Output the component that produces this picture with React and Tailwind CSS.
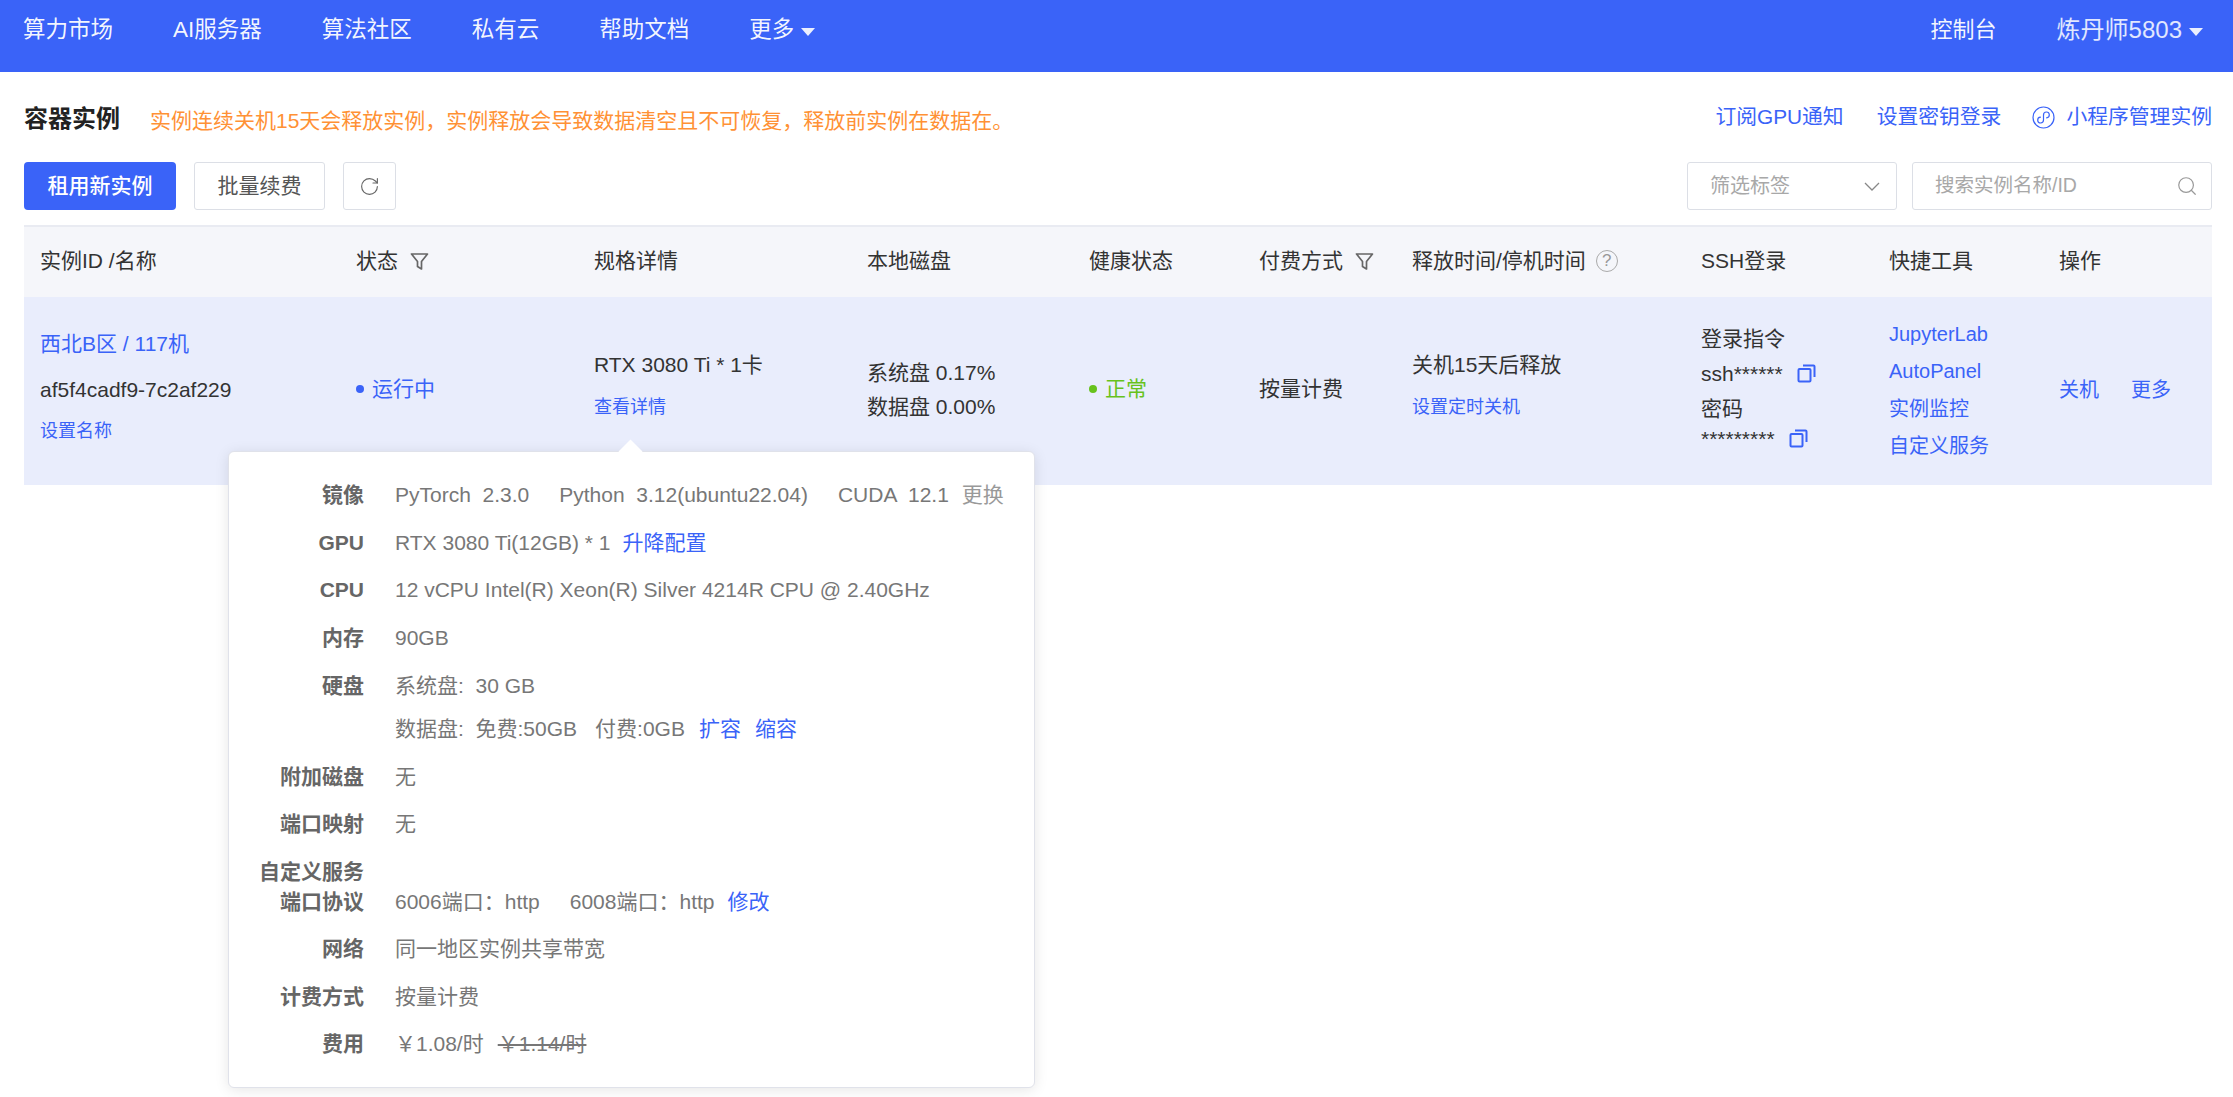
import React from 'react';
import { RotateCw, Search } from 'lucide-react';

const navItems = ['算力市场', 'AI服务器', '算法社区', '私有云', '帮助文档'];

function Caret() {
  return <span className="ml-[7px] mt-1 inline-block h-0 w-0 border-x-[7px] border-t-[8px] border-x-transparent border-t-white/90" />;
}

function Funnel({ className }) {
  return (
    <svg className={className} width="19" height="19" viewBox="0 0 19 19" fill="none" stroke="#666" strokeWidth="1.7" strokeLinejoin="round">
      <path d="M1.5 2h16l-6 7.5v7.5l-4-2.5v-5z" />
    </svg>
  );
}

function CopyIcon({ className }) {
  return (
    <svg className={className} width="19" height="19" viewBox="0 0 19 19" fill="none" stroke="#3a63f8" strokeWidth="2">
      <rect x="1.5" y="5" width="12" height="12.5" rx="1" />
      <path d="M6 1.5h10.5a1 1 0 0 1 1 1V13" />
    </svg>
  );
}

function MiniAppIcon() {
  return (
    <svg width="23" height="23" viewBox="0 0 23 23" fill="none" stroke="#3a63f8" strokeWidth="1.2" strokeLinecap="round">
      <circle cx="11.5" cy="11.5" r="10.5" />
      <path d="M8.4 11.2a2.9 2.9 0 1 0 3.1 2.9V8.9a2.9 2.9 0 1 1 3.1 2.9" />
    </svg>
  );
}

function Row({ label, className = 'mt-[17.5px]', children }) {
  return (
    <div className={`flex h-[30px] items-center leading-[30px] ${className}`}>
      <div className="w-[135px] shrink-0 text-right font-bold text-[#666]">{label}</div>
      <div className="ml-[31px] flex items-center whitespace-pre text-[#777]">{children}</div>
    </div>
  );
}

function PopLink({ children, className = '' }) {
  return <span className={`text-[#3a63f8] ${className}`}>{children}</span>;
}

export default function App() {
  return (
    <div className="min-h-[1097px] bg-white text-[21px] text-[#333] [font-family:'Liberation_Sans','Noto_Sans_CJK_SC',sans-serif]">
      <div className="flex h-[72px] justify-between bg-[#3a63f8] pl-[23px] pr-[30px] pt-[14px] text-[22.5px] leading-[32px] text-white/95">
        <div className="flex gap-[60px]">
          {navItems.map(n => <span key={n}>{n}</span>)}
          <span className="flex items-center self-start">更多<Caret /></span>
        </div>
        <div className="flex gap-[60px] text-[22px]">
          <span>控制台</span>
          <span className="flex items-center self-start text-[24px] text-white/85">炼丹师5803<Caret /></span>
        </div>
      </div>

      <div className="pl-6 pr-[21px] pt-7">
        <div className="flex h-[38px] items-center justify-between">
          <div className="flex items-center">
            <span className="text-[24px] font-bold text-[#222]">容器实例</span>
            <span className="ml-[30px] mt-1 text-[21px] text-[#ff9135]">实例连续关机15天会释放实例，实例释放会导致数据清空且不可恢复，释放前实例在数据在。</span>
          </div>
          <div className="-mt-1 flex items-center text-[20.8px] text-[#3a63f8]">
            <span>订阅GPU通知</span>
            <span className="ml-[33px]">设置密钥登录</span>
            <span className="ml-[31px] mr-[11px]"><MiniAppIcon /></span>
            <span>小程序管理实例</span>
          </div>
        </div>

        <div className="mt-6 flex h-12 justify-between">
          <div className="flex">
            <button className="h-12 w-[152px] rounded-[4px] bg-[#3a63f8] text-[21px] font-medium text-white">租用新实例</button>
            <button className="ml-[18px] h-12 w-[131px] rounded-[3px] border-[1.5px] border-[#dcdfe6] text-[21px] text-[#555]">批量续费</button>
            <button className="ml-[18px] flex h-12 w-[53px] items-center justify-center rounded-[3px] border-[1.5px] border-[#dcdfe6] text-[#666]"><RotateCw size={21} strokeWidth={1.3} /></button>
          </div>
          <div className="flex">
            <div className="flex h-12 w-[210px] items-center justify-between rounded-[3px] border-[1.5px] border-[#dcdfe6] pl-[22px] pr-4 text-[20px] text-[#a8a8a8]">
              筛选标签
              <svg width="16" height="9" viewBox="0 0 16 9" fill="none" stroke="#888" strokeWidth="1.3"><path d="M1 1l7 7 7-7" /></svg>
            </div>
            <div className="ml-[15px] flex h-12 w-[300px] items-center justify-between rounded-[3px] border-[1.5px] border-[#dcdfe6] pl-[22px] pr-[13px] text-[19.5px] text-[#a8a8a8]">
              搜索实例名称/ID
              <Search size={22} strokeWidth={1.3} className="text-[#999]" />
            </div>
          </div>
        </div>

        <div className="relative mt-[15px]">
          <div className="grid h-[72px] grid-cols-[316px_238px_273px_222px_170px_153px_289px_188px_170px_169px] items-center border-t-2 border-[#e9ebf2] bg-[#f5f6fa] pb-[2px] [&>div]:flex [&>div]:items-center [&>div]:pl-4">
            <div>实例ID /名称</div>
            <div>状态<Funnel className="ml-3" /></div>
            <div>规格详情</div>
            <div>本地磁盘</div>
            <div>健康状态</div>
            <div>付费方式<Funnel className="ml-3" /></div>
            <div>
              释放时间/停机时间
              <span className="ml-[10px] flex h-[22px] w-[22px] items-center justify-center rounded-full border-[1.5px] border-[#aaa] text-[17px] text-[#999]">?</span>
            </div>
            <div>SSH登录</div>
            <div>快捷工具</div>
            <div>操作</div>
          </div>

          <div className="grid h-[188px] grid-cols-[316px_238px_273px_222px_170px_153px_289px_188px_170px_169px] bg-[#e9edfc] leading-[30px] [&>div]:flex [&>div]:flex-col [&>div]:justify-center [&>div]:pl-4">
            <div className="pb-[8px]">
              <span className="text-[#3a63f8]">西北B区 / 117机</span>
              <span className="mt-4">af5f4cadf9-7c2af229</span>
              <span className="mt-[11px] text-[18px] text-[#3a63f8]">设置名称</span>
            </div>
            <div className="pb-1">
              <span className="flex items-center text-[#3a63f8]"><span className="mr-[8px] h-2 w-2 rounded-full bg-[#3a63f8]" />运行中</span>
            </div>
            <div className="pb-[10px]">
              <span>RTX 3080 Ti * 1卡</span>
              <span className="mt-3 text-[18px] text-[#3a63f8]">查看详情</span>
            </div>
            <div className="pb-[2px]">
              <span>系统盘 0.17%</span>
              <span className="mt-1">数据盘 0.00%</span>
            </div>
            <div className="pb-1">
              <span className="flex items-center text-[#67c21c]"><span className="mr-[8px] h-2 w-2 rounded-full bg-[#67c21c]" />正常</span>
            </div>
            <div className="pb-1">按量计费</div>
            <div className="pb-[10px]">
              <span>关机15天后释放</span>
              <span className="mt-3 text-[18px] text-[#3a63f8]">设置定时关机</span>
            </div>
            <div className="pb-[5px]">
              <span>登录指令</span>
              <span className="mt-[5px] flex items-center">ssh******<CopyIcon className="ml-[14px]" /></span>
              <span className="mt-[5px]">密码</span>
              <span className="flex items-center">*********<CopyIcon className="ml-[14px]" /></span>
            </div>
            <div className="pb-[2px] text-[20px] text-[#3a63f8]">
              <span>JupyterLab</span>
              <span className="mt-[7px]">AutoPanel</span>
              <span className="mt-2">实例监控</span>
              <span className="mt-[7px]">自定义服务</span>
            </div>
            <div className="pb-[2px] text-[20px]">
              <span className="flex gap-[32px] text-[#3a63f8]"><span>关机</span><span>更多</span></span>
            </div>
          </div>

          {/* spec popover */}
          <div className="absolute left-[204px] top-[226px] h-[637px] w-[807px] rounded-[6px] border border-[#e0e2ea] bg-white pt-[28px] shadow-[0_2px_14px_rgba(0,0,0,0.1)]">
            <div className="absolute -top-[9px] left-[393px] h-[17px] w-[17px] rotate-45 bg-white" />
            <Row label="镜像" className="">
              PyTorch  2.3.0
              <span className="ml-[30px]">Python  3.12(ubuntu22.04)</span>
              <span className="ml-[30px]">CUDA  12.1</span>
              <span className="ml-[13px] text-[#999]">更换</span>
            </Row>
            <Row label="GPU">RTX 3080 Ti(12GB) * 1<PopLink className="ml-3">升降配置</PopLink></Row>
            <Row label="CPU">12 vCPU Intel(R) Xeon(R) Silver 4214R CPU @ 2.40GHz</Row>
            <Row label="内存">90GB</Row>
            <Row label="硬盘" className="mt-[18.5px]">系统盘:  30 GB</Row>
            <Row label="" className="mt-[13px]">
              数据盘:  免费:50GB
              <span className="ml-[18px]">付费:0GB</span>
              <PopLink className="ml-[14px]">扩容</PopLink>
              <PopLink className="ml-[14px]">缩容</PopLink>
            </Row>
            <Row label="附加磁盘">无</Row>
            <Row label="端口映射">无</Row>
            <Row label="自定义服务" />
            <Row label="端口协议" className="">
              6006端口：http
              <span className="ml-[30px]">6008端口：http</span>
              <PopLink className="ml-[13px]">修改</PopLink>
            </Row>
            <Row label="网络">同一地区实例共享带宽</Row>
            <Row label="计费方式">按量计费</Row>
            <Row label="费用">
              ￥1.08/时
              <span className="ml-[14px] line-through">￥1.14/时</span>
            </Row>
          </div>
        </div>
      </div>
    </div>
  );
}
